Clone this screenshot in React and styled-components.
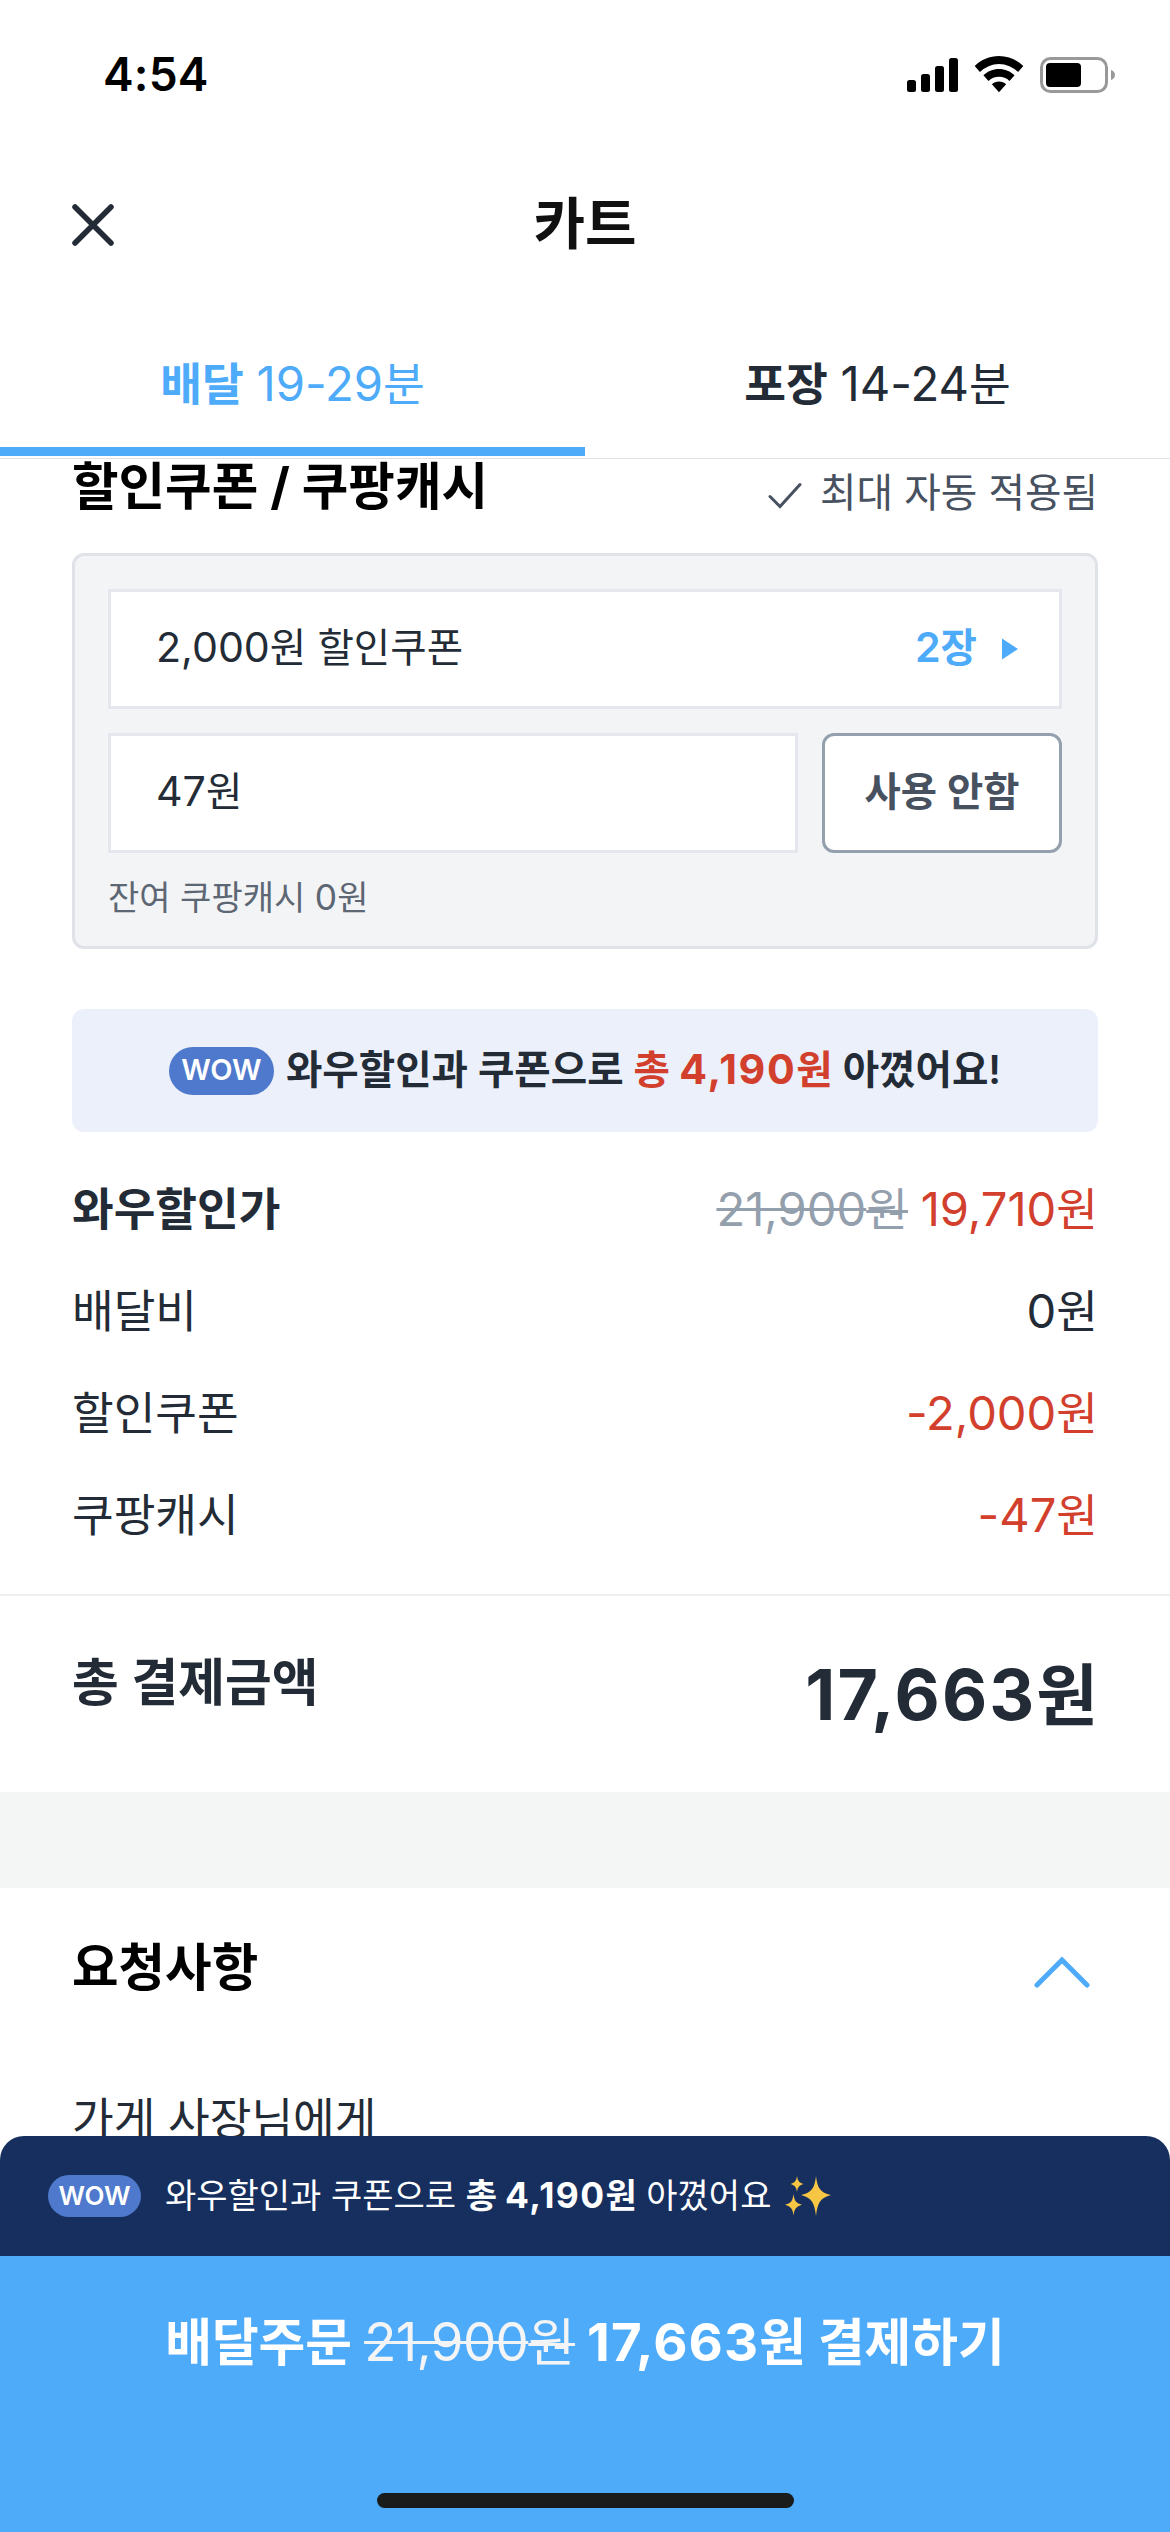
import React from 'react';
import styled, { createGlobalStyle } from 'styled-components';

const GlobalStyle = createGlobalStyle`
    body {
        margin: 0;
        background: #fff;
    }
`

const Screen = styled.div`
    display: flex;
    flex-direction: column;
    width: 1170px;
    height: 2532px;
    overflow: hidden;
    background: #fff;
    color: #232c36;
    font-family: Inter, "Noto Sans CJK KR", sans-serif;
    line-height: 1.2;
    white-space: nowrap;
`

/* 숫자는 한글보다 살짝 크게 */
const Num = styled.span`
    font-size: 1.04em;
    line-height: 0;
    letter-spacing: ${props => props.$spacing || '0'};
`

const StatusBar = styled.div`
    display: flex;
    flex-shrink: 0;
    justify-content: space-between;
    align-items: center;
    height: 149px;
    box-sizing: border-box;
    padding: 0 54px 0 103px;
    color: #000;
`

const Time = styled.span`
    font-size: 46px;
    font-weight: 600;
    letter-spacing: 0.2px;
`

const Header = styled.div`
    display: grid;
    flex-shrink: 0;
    grid-template-columns: 1fr auto 1fr;
    height: 172px;
    box-sizing: border-box;
    padding: 0 72px;
`

const CloseIcon = styled.svg`
    display: block;
    margin-top: 55px;
`

const Title = styled.h1`
    margin: 0;
    font-size: 56px;
    font-weight: 600;
    line-height: 150px;
    color: #111;
`

const Tabs = styled.div`
    display: flex;
    flex-shrink: 0;
    height: 137px;
    border-bottom: 1px solid #dfe1e6;
`

const Tab = styled.div`
    flex: 1;
    height: 126px;
    line-height: 128px;
    text-align: center;
    font-size: 45.4px;
    color: ${props => props.$active ? '#4eabfa' : '#232c36'};
    border-bottom: 9px solid ${props => props.$active ? '#4eabfa' : 'transparent'};
`

const Bold = styled.b`
    font-weight: ${props => props.$weight || 700};
    color: ${props => props.$color || 'inherit'};
`

const Content = styled.div`
    flex: 1;
    min-height: 0;
    overflow: hidden;
`

const SectionHead = styled.div`
    display: flex;
    justify-content: space-between;
    height: 94px;
    padding: 0 72px;
`

const SectionTitle = styled.h2`
    margin: 0;
    font-size: 50.6px;
    font-weight: 700;
    line-height: ${props => props.$line}px;
    color: #000;
`

const AutoApplied = styled.div`
    display: flex;
    gap: 18px;
    font-size: 39.7px;
    line-height: 68px;
    color: #475160;
`

const CheckIcon = styled.svg`
    margin-top: 23px;
`

const Panel = styled.div`
    height: 396px;
    margin: 0 72px;
    padding: 33px;
    box-sizing: border-box;
    border: 3px solid #dfe2e7;
    border-radius: 12px;
    background: #f3f4f6;
`

const FieldRow = styled.div`
    display: flex;
    gap: 24px;
    margin-bottom: 24px;
`

const Field = styled.div`
    display: flex;
    flex: 1;
    align-items: center;
    justify-content: space-between;
    height: 120px;
    box-sizing: border-box;
    padding: 0 41px 0 45px;
    border: 3px solid #e4e7ed;
    background: #fff;
    font-size: 39.6px;
`

const CouponCount = styled.div`
    display: flex;
    align-items: center;
    gap: 25px;
    font-weight: 600;
    color: #4eabfa;
`

const OutlineButton = styled.button`
    width: 240px;
    height: 120px;
    padding: 0;
    border: 3px solid #94a0ae;
    border-radius: 12px;
    background: #fff;
    font-family: inherit;
    font-size: 39.4px;
    font-weight: 600;
    line-height: 1.2;
    color: #475160;
`

const Note = styled.div`
    font-size: 34px;
    line-height: 42px;
    color: #5d6774;
`

const Banner = styled.div`
    display: flex;
    align-items: center;
    justify-content: center;
    gap: 12px;
    height: 123px;
    margin: 60px 72px 27px;
    border-radius: 12px;
    background: #ecf0fa;
    font-size: 39.6px;
    font-weight: 600;
`

const WowBadge = styled.span`
    display: inline-flex;
    flex-shrink: 0;
    align-items: center;
    justify-content: center;
    width: ${props => props.$small ? 93 : 105}px;
    height: ${props => props.$small ? 42 : 48}px;
    border-radius: 24px;
    background: #4e79cc;
    color: #fff;
    font-size: ${props => props.$small ? 26 : 29}px;
    font-weight: 600;
`

const PriceRow = styled.div`
    display: flex;
    justify-content: space-between;
    padding: 0 72px;
    font-size: 45.3px;
    line-height: 102px;
`

const Price = styled.span`
    color: ${props => props.$discount ? '#d2402d' : '#232c36'};
`

const Strike = styled.span`
    color: ${props => props.$color};
    font-weight: 400;
    text-decoration: line-through;
    text-decoration-thickness: 3px;
`

const TotalRow = styled.div`
    display: flex;
    justify-content: space-between;
    height: 196px;
    margin-top: 27px;
    padding: 0 72px;
    border-top: 2px solid #eee;
`

const TotalLabel = styled.span`
    font-size: 50.8px;
    font-weight: 600;
    line-height: 174px;
`

const TotalPrice = styled.span`
    font-size: 67px;
    font-weight: 700;
    line-height: 199px;
`

const Divider = styled.div`
    height: 96px;
    background: #f4f6f6;
`

const RequestHead = styled.div`
    display: flex;
    justify-content: space-between;
    height: 158px;
    padding: 0 80px 0 72px;
`

const ChevronIcon = styled.svg`
    margin-top: 68px;
`

const RequestLabel = styled.div`
    padding: 0 72px;
    font-size: 45.3px;
    line-height: 148px;
`

const Footer = styled.div`
    flex-shrink: 0;
`

const SavingBar = styled.div`
    display: flex;
    align-items: center;
    height: 120px;
    box-sizing: border-box;
    padding: 0 48px;
    border-radius: 24px 24px 0 0;
    background: #162f5f;
    color: #fff;
    font-size: 34px;
`

const SavingText = styled.span`
    margin: 0 14px 0 24px;
`

const OrderButton = styled.div`
    height: 276px;
    background: #4eabfa;
    color: #fff;
    text-align: center;
    font-size: 50.8px;
    font-weight: 700;
    line-height: 174px;
`

const HomeIndicator = styled.div`
    width: 417px;
    height: 15px;
    margin: 63px auto 0;
    border-radius: 8px;
    background: #1a1b1b;
`

const StatusIcons = () => (
    <svg width="210" height="40" viewBox="906 54 210 40">
        <rect x="907" y="79" width="9" height="12" rx="2.5" />
        <rect x="921" y="73" width="9" height="18" rx="2.5" />
        <rect x="935" y="65" width="9" height="26" rx="2.5" />
        <rect x="949" y="57" width="9" height="34" rx="2.5" />
        <path d="M999 55c9.300 0 18 3.700 24.300 10l-5.200 6a27 27 0 0 0-38.200 0l-5.200-6c6.300-6.300 15-10 24.300-10z" />
        <path d="M999 68c6 0 11.500 2.400 15.600 6.300l-5.100 5.600a15.500 15.500 0 0 0-21 0l-5.100-5.600c4.100-3.900 9.600-6.300 15.600-6.300z" />
        <path d="M999 80.500c2.700 0 5.200 1 7.100 2.700l-7.100 8-7.100-8c1.900-1.700 4.400-2.700 7.100-2.700z" />
        <rect x="1041.500" y="57.500" width="65" height="33" rx="9" fill="none" stroke="#999" strokeWidth="3" />
        <rect x="1046" y="62" width="35" height="24" rx="4" />
        <path d="M1111 69c2.500.8 4 2.700 4 5s-1.500 4.300-4 5z" fill="#999" />
    </svg>
)

const Sparkles = () => (
    <svg width="46" height="46" viewBox="0 -3 46 46">
        <g fill="#f6c644">
            <path d="M31 0c1.500 12 4 16.500 15 19-11 3-13.500 8-15 21-1.500-13-4-18-15-21 11-2.500 13.500-7 15-19z" />
            <path d="M12 0c.8 5 2 6.500 6.500 8-4.500 1.500-5.700 3-6.500 8-.8-5-2-6.500-6.500-8 4.500-1.500 5.700-3 6.500-8z" />
            <path d="M8.500 18c1 7.500 2.500 9 8.500 10.800-6 1.900-7.500 3.700-8.500 10.700-1-7-2.500-8.800-8.500-10.700 6-1.800 7.500-3.300 8.500-10.800z" />
        </g>
    </svg>
)

const App = () => (
    <Screen>
        <GlobalStyle />
        <StatusBar>
            <Time>4:54</Time>
            <StatusIcons />
        </StatusBar>
        <Header>
            <CloseIcon width="42" height="42" viewBox="0 0 42 42">
                <path d="M3 3l36 36M39 3L3 39" stroke="#232c36" strokeWidth="5.500" strokeLinecap="round" />
            </CloseIcon>
            <Title>카트</Title>
        </Header>
        <Tabs>
            <Tab $active><Bold>배달</Bold> <Num>19-29</Num>분</Tab>
            <Tab><Bold>포장</Bold> <Num>14-24</Num>분</Tab>
        </Tabs>
        <Content>
            <SectionHead>
                <SectionTitle $line={55}>할인쿠폰 / 쿠팡캐시</SectionTitle>
                <AutoApplied>
                    <CheckIcon width="34" height="28" viewBox="0 0 34 28">
                        <path d="M2 14.500l10 10L32 2.500" fill="none" stroke="#475160" strokeWidth="3" strokeLinecap="round" />
                    </CheckIcon>
                    최대 자동 적용됨
                </AutoApplied>
            </SectionHead>
            <Panel>
                <FieldRow>
                    <Field>
                        <span><Num>2,000</Num>원 할인쿠폰</span>
                        <CouponCount>
                            <span><Num>2</Num>장</span>
                            <svg width="16" height="24" viewBox="0 0 16 24">
                                <path d="M0 1.500l16 10.500L0 22.500z" fill="#4eabfa" />
                            </svg>
                        </CouponCount>
                    </Field>
                </FieldRow>
                <FieldRow>
                    <Field><span><Num>47</Num>원</span></Field>
                    <OutlineButton>사용 안함</OutlineButton>
                </FieldRow>
                <Note>잔여 쿠팡캐시 <Num>0</Num>원</Note>
            </Panel>
            <Banner>
                <WowBadge>WOW</WowBadge>
                <span>와우할인과 쿠폰으로 <Bold $color="#d2402d">총 <Num $spacing="0.04em">4,190</Num>원</Bold> 아꼈어요!</span>
            </Banner>
            <PriceRow>
                <Bold $weight={600}>와우할인가</Bold>
                <Price $discount>
                    <Strike $color="#949fad"><Num>21,900</Num>원</Strike> <Num>19,710</Num>원
                </Price>
            </PriceRow>
            <PriceRow>
                <span>배달비</span>
                <Price><Num>0</Num>원</Price>
            </PriceRow>
            <PriceRow>
                <span>할인쿠폰</span>
                <Price $discount><Num>-2,000</Num>원</Price>
            </PriceRow>
            <PriceRow>
                <span>쿠팡캐시</span>
                <Price $discount><Num>-47</Num>원</Price>
            </PriceRow>
            <TotalRow>
                <TotalLabel>총 결제금액</TotalLabel>
                <TotalPrice><Num $spacing="0.03em">17,663</Num>원</TotalPrice>
            </TotalRow>
            <Divider />
            <RequestHead>
                <SectionTitle $line={160}>요청사항</SectionTitle>
                <ChevronIcon width="56" height="32" viewBox="0 0 56 32">
                    <path d="M3 29L28 4l25 25" fill="none" stroke="#4eabfa" strokeWidth="5" strokeLinecap="round" />
                </ChevronIcon>
            </RequestHead>
            <RequestLabel>가게 사장님에게</RequestLabel>
        </Content>
        <Footer>
            <SavingBar>
                <WowBadge $small>WOW</WowBadge>
                <SavingText>와우할인과 쿠폰으로 <Bold>총 <Num $spacing="0.04em">4,190</Num>원</Bold> 아꼈어요</SavingText>
                <Sparkles />
            </SavingBar>
            <OrderButton>
                배달주문 <Strike $color="#f3f4f6"><Num $spacing="-0.012em">21,900</Num>원</Strike> <Num $spacing="0.02em">17,663</Num>원 결제하기
                <HomeIndicator />
            </OrderButton>
        </Footer>
    </Screen>
)

export default App;
